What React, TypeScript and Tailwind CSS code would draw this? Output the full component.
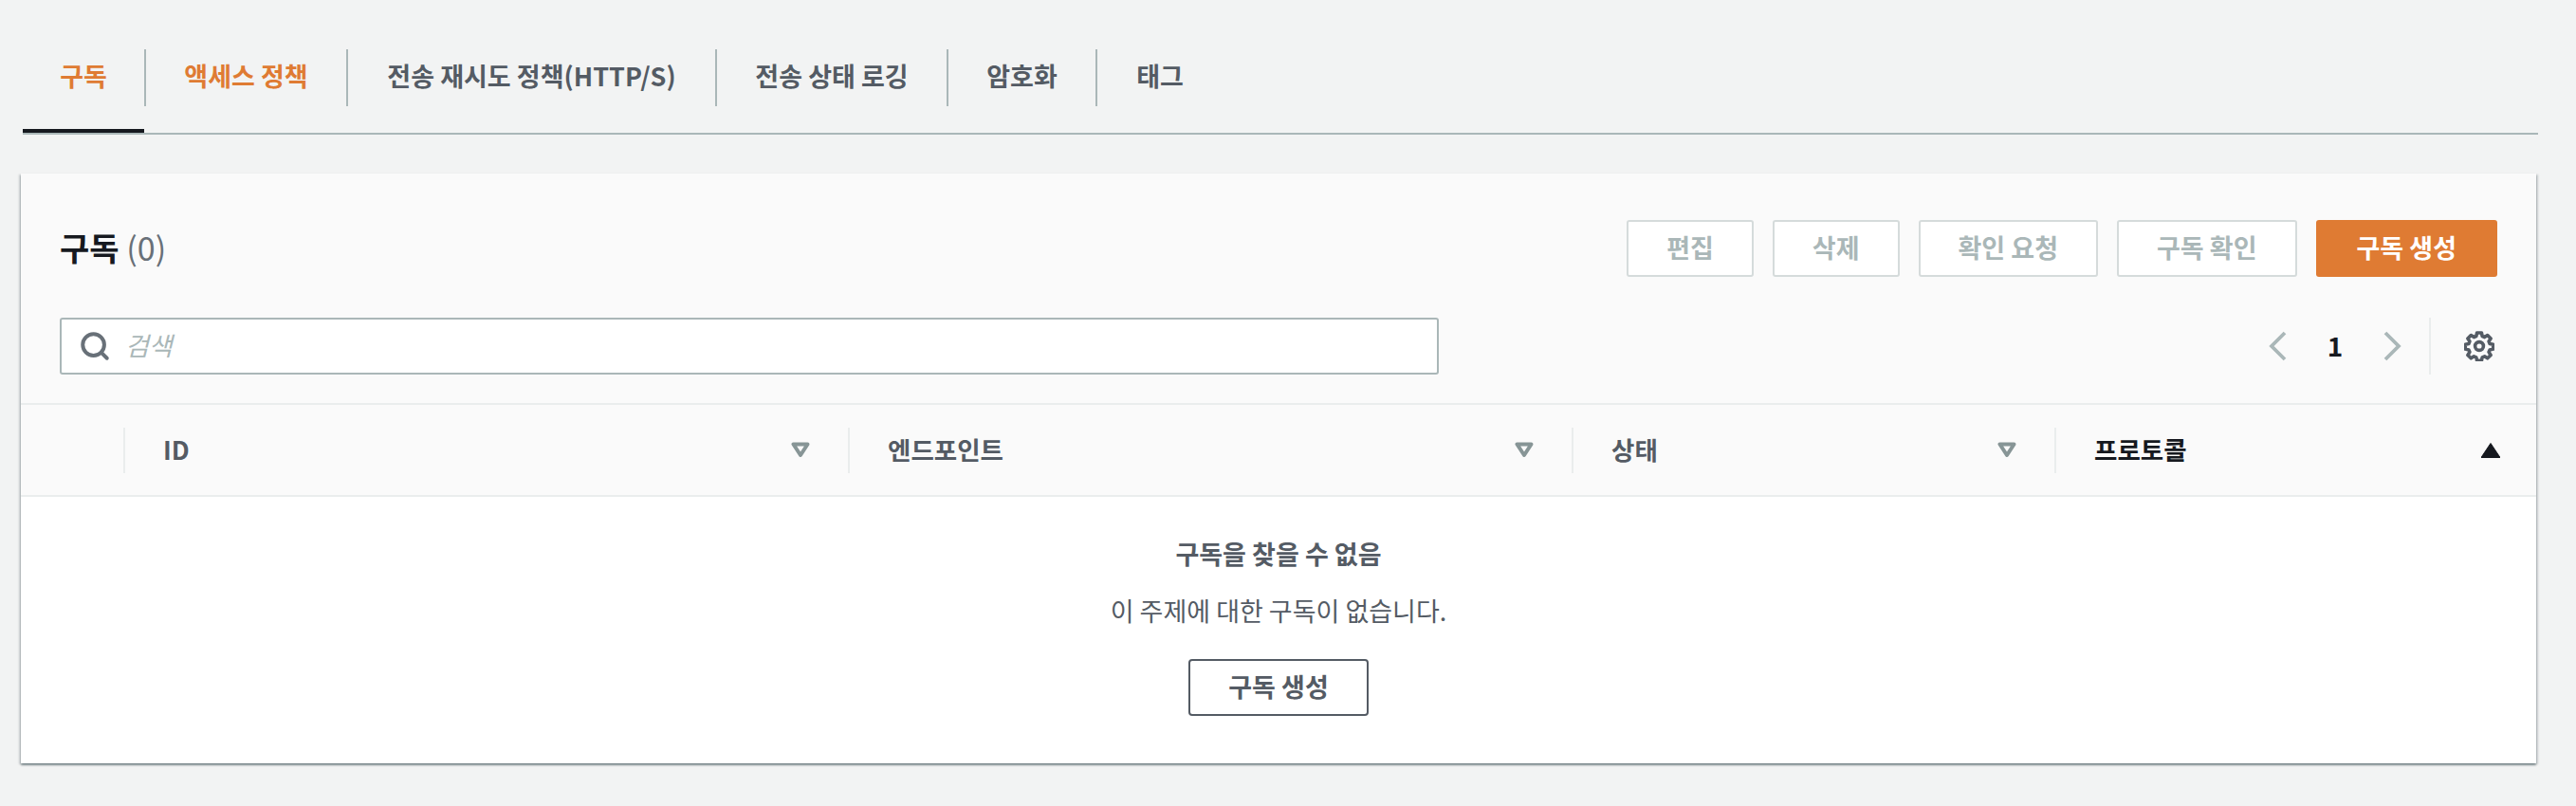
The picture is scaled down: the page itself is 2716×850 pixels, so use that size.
import { Search } from 'lucide-react';

const FONT = "font-['Noto_Sans_CJK_KR','Noto_Sans',sans-serif]";

const tabs = [
  { label: '구독', width: 'w-[128px]', className: 'text-[#df7b33] border-b-4 border-b-[#16191f]' },
  { label: '액세스 정책', width: 'w-[213px]', className: 'text-[#df7b33]' },
  { label: '전송 재시도 정책(HTTP/S)', width: 'w-[389px]', className: 'text-[#545b64]' },
  { label: '전송 상태 로깅', width: 'w-[244px]', className: 'text-[#545b64]' },
  { label: '암호화', width: 'w-[157px]', className: 'text-[#545b64]' },
  { label: '태그', width: 'w-[134px]', className: 'text-[#545b64]' },
];

const actions = ['편집', '삭제', '확인 요청', '구독 확인'];

function FilterIcon() {
  return (
    <svg width="20" height="17" viewBox="0 0 20 17" fill="none" className="shrink-0">
      <path d="M2.5 2.5h15L10 14z" stroke="#879596" strokeWidth="4" strokeLinejoin="round" />
    </svg>
  );
}

function GearIcon() {
  return (
    <svg width="32" height="32" viewBox="0 0 32 32" fill="none" stroke="#545b64" strokeWidth="3.6" strokeLinejoin="round">
      <path d="M13.6 2h4.8l.8 3.6 2.4 1 3.1-2 3.4 3.4-2 3.1 1 2.4 3.6.8v4.8l-3.6.8-1 2.4 2 3.1-3.4 3.4-3.1-2-2.4 1-.8 3.6h-4.8l-.8-3.6-2.4-1-3.1 2-3.4-3.4 2-3.1-1-2.4-3.6-.8v-4.8l3.6-.8 1-2.4-2-3.1 3.4-3.4 3.1 2 2.4-1z" />
      <circle cx="16" cy="16" r="4.4" />
    </svg>
  );
}

function Chevron({ flip }: { flip?: boolean }) {
  return (
    <svg width="20" height="32" viewBox="0 0 20 32" fill="none" stroke="#aab7b8" strokeWidth="3.8" className={flip ? 'rotate-180' : ''}>
      <path d="M17 2 3 16l14 14" />
    </svg>
  );
}

function HeaderCell({ label, width, sorted }: { label: string; width: string; sorted?: boolean }) {
  return (
    <div className={`${width} flex items-center`}>
      <div className="h-[48px] w-[2px] bg-[#eaeded]" />
      <div className="flex flex-1 items-center justify-between pl-[40px] pr-[40px]">
        <span className={`pb-[2px] text-[26.5px] font-bold leading-[36px] ${sorted ? 'text-[#16191f]' : 'text-[#545b64]'}`}>{label}</span>
        {sorted ? (
          <svg width="20" height="16" viewBox="0 0 20 16" fill="#16191f" className="-mr-[2px]">
            <path d="M10 0.5 20 15.5H0z" stroke="#16191f" strokeLinejoin="round" strokeWidth="1" />
          </svg>
        ) : (
          <FilterIcon />
        )}
      </div>
    </div>
  );
}

export default function App() {
  return (
    <div className={`${FONT} h-[850px] w-full overflow-hidden bg-[#f2f3f3] pt-[52px]`}>
      {/* tabs */}
      <div className="ml-[24px] mr-[40px] flex h-[90px] border-b-2 border-[#aab7b8]">
        {tabs.map((tab, i) => (
          <div key={tab.label} className={`${tab.width} h-[88px] shrink-0 ${tab.className}`}>
            <div
              className={`flex h-[60px] items-center justify-center pb-[4px] text-[27px] font-bold ${
                i > 0 ? 'border-l-2 border-[#aab7b8]' : ''
              }`}
            >
              {tab.label}
            </div>
          </div>
        ))}
      </div>

      {/* card */}
      <div className="ml-[22px] mt-[41px] w-[2652px] bg-white shadow-[0_2px_2px_0_rgba(0,28,36,0.4),2px_1px_2px_0_rgba(0,28,36,0.15),-2px_1px_2px_0_rgba(0,28,36,0.15)]">
        <div className="border-b-2 border-[#eaeded] bg-[#fafafa] px-[41px] pb-[30px] pt-[49px]">
          <div className="flex h-[60px] items-center justify-between">
            <h2 className="pb-[3px] text-[34px] font-bold text-[#16191f]">
              구독 <span className="font-normal text-[#687078]">(0)</span>
            </h2>
            <div className="flex gap-[20px]">
              {actions.map((action) => (
                <button key={action} className="h-[60px] rounded-[3px] border-2 border-[#d5dbdb] bg-white px-[40px] pb-[2px] text-[27px] font-bold text-[#aab7b8]">
                  {action}
                </button>
              ))}
              <button className="h-[60px] rounded-[3px] bg-[#df7b33] px-[43px] pb-[2px] text-[27px] font-bold text-white">구독 생성</button>
            </div>
          </div>
          <div className="mt-[43px] flex h-[60px] items-center justify-between">
            <div className="flex h-[60px] w-[1454px] items-center gap-[15px] rounded-[3px] border-2 border-[#aab7b8] bg-white pl-[18px]">
              <Search size={34} strokeWidth={2.8} color="#687078" />
              <span className="pb-[2px] text-[27px] italic text-[#aab7b8]">검색</span>
            </div>
            <div className="flex h-[60px] items-center">
              <Chevron />
              <span className="w-[100px] pb-[2px] text-center text-[28px] font-bold text-[#16191f]">1</span>
              <Chevron flip />
              <div className="ml-[29px] h-[60px] w-[2px] bg-[#eaeded]" />
              <div className="ml-[35px] mr-[3px]">
                <GearIcon />
              </div>
            </div>
          </div>
        </div>

        <div className="box-content flex h-[95px] border-b-2 border-[#eaeded] bg-[#fafafa]">
          <div className="w-[108px]" />
          <HeaderCell label="ID" width="w-[764px]" />
          <HeaderCell label="엔드포인트" width="w-[763px]" />
          <HeaderCell label="상태" width="w-[509px]" />
          <HeaderCell label="프로토콜" width="w-[508px]" sorted />
        </div>

        <div className="flex h-[281px] flex-col items-center pt-[41px]">
          <div className="text-[27px] font-bold leading-[38px] text-[#545b64]">구독을 찾을 수 없음</div>
          <div className="mt-[22px] text-[27px] leading-[38px] text-[#545b64]">이 주제에 대한 구독이 없습니다.</div>
          <button className="mt-[32px] h-[60px] w-[190px] rounded-[4px] border-2 border-[#545b64] bg-white pb-[2px] text-[27px] font-bold text-[#545b64]">
            구독 생성
          </button>
        </div>
      </div>
    </div>
  );
}
